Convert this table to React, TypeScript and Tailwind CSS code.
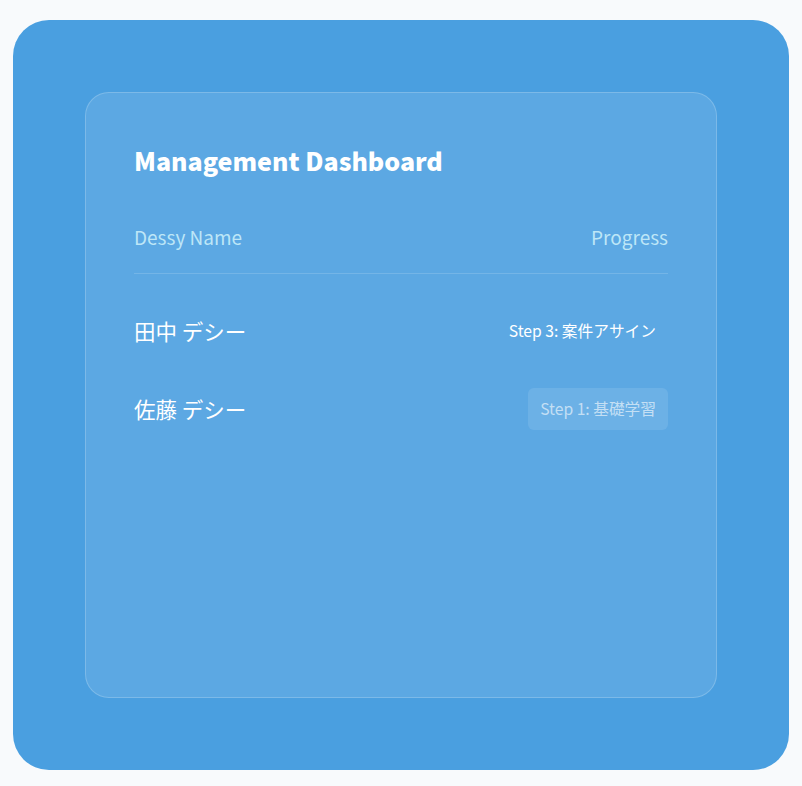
const rows = [
  { name: '田中 デシー', step: 'Step 3: 案件アサイン', active: true },
  { name: '佐藤 デシー', step: 'Step 1: 基礎学習', active: false },
]

export default function App() {
  return (
    <div
      className="min-h-screen bg-[#f8fafc] pt-5 pb-4 px-[13px]"
      style={{ fontFamily: '"Noto Sans CJK JP", "Noto Sans", sans-serif' }}
    >
      <div className="h-[750px] rounded-[36px] bg-[#4a9fe0] p-[72px]">
        <div className="h-full rounded-3xl border border-white/20 bg-white/10 px-12 pt-[51px]">
          <h1 className="text-[25px] leading-8 font-black text-white">Management Dashboard</h1>

          {/* Table header */}
          <div className="mt-[47px] flex justify-between border-b border-white/15 pb-[22px] text-[19px] leading-7 text-[#bde6f7]">
            <span>Dessy Name</span>
            <span>Progress</span>
          </div>

          {/* Rows */}
          <div className="mt-[18px]">
            {rows.map((row) => (
              <div key={row.name} className="flex items-center justify-between py-[18px]">
                <span className="text-[21.5px] text-white">{row.name}</span>
                <span
                  className={
                    row.active
                      ? 'rounded-md px-3 py-[10px] text-[15.7px] leading-[22px] text-white'
                      : 'rounded-md bg-white/10 px-3 py-[10px] text-[15.7px] leading-[22px] text-white/60'
                  }
                >
                  {row.step}
                </span>
              </div>
            ))}
          </div>
        </div>
      </div>
    </div>
  )
}
